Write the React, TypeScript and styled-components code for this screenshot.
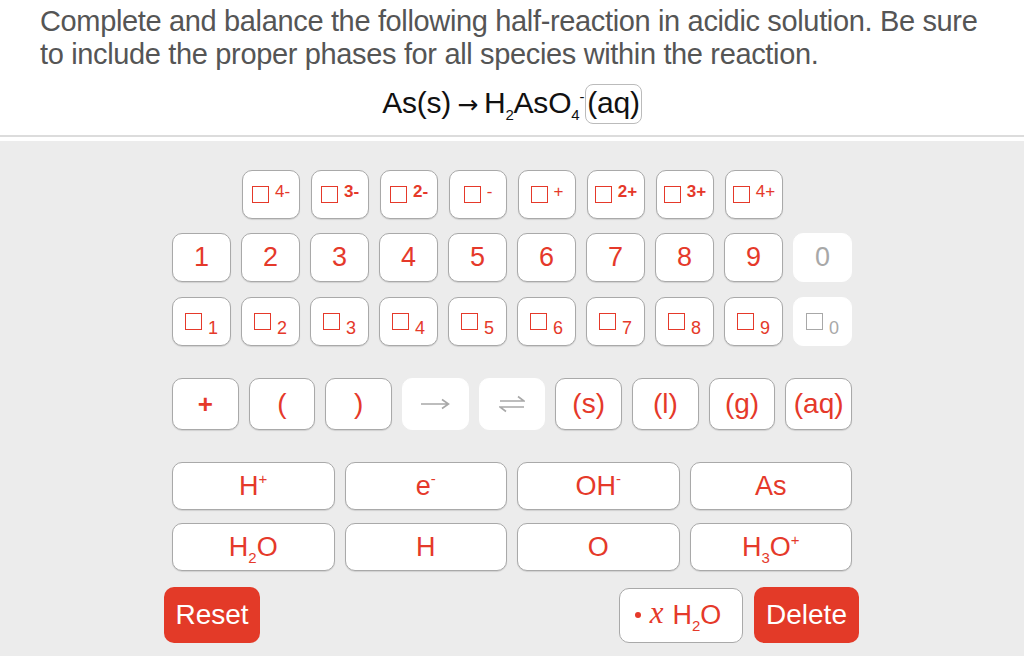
import styled, { createGlobalStyle } from 'styled-components';

const Global = createGlobalStyle`
    html, body { margin: 0; padding: 0; background: #ececec; }
    body { font-family: "Liberation Sans", Arial, sans-serif; }
`;

const RED = '#e5392a';

const Page = styled.div`
    width: 1024px;
    height: 656px;
    overflow: hidden;
    display: flex;
    flex-direction: column;
`;

const Header = styled.div`
    background: #fff;
    padding: 5px 0 0 40px;
    height: 137px;
    box-sizing: border-box;
    border-bottom: 2px solid #dcdcdc;
    margin-bottom: 4px;
    box-shadow: 0 4px 0 #fff;
`;

const Question = styled.p`
    margin: 0;
    font-size: 29px;
    line-height: 33px;
    color: #555;
    letter-spacing: -0.35px;
`;

const Equation = styled.div`
    margin-top: 13px;
    padding-right: 40px;
    text-align: center;
    font-size: 30px;
    color: #111;
    letter-spacing: -0.2px;
`;

const Arrow = styled.span`
    font-family: "DejaVu Sans", sans-serif;
    font-size: 25px;
    margin: 0 6px;
`;

const Sub = styled.sub`
    font-size: 15px;
    vertical-align: -7px;
    line-height: 0;
`;

const Sup = styled.sup`
    font-size: 15px;
    vertical-align: 11px;
    line-height: 0;
`;

const Cursor = styled.span`
    display: inline-block;
    border: 1px solid #bbb;
    border-radius: 8px;
    padding: 1px 1px 4px;
    line-height: 33px;
    margin-left: 1px;
`;

const Pad = styled.div`
    padding: 29px 0 0 172px;
    display: flex;
    flex-direction: column;
    width: 680px;
`;

const Row = styled.div<{ $cols: number; $gap: number; $top: number; $indent?: number; $right?: number }>`
    display: grid;
    grid-template-columns: repeat(${p => p.$cols}, 1fr);
    column-gap: ${p => p.$gap}px;
    margin-top: ${p => p.$top}px;
    padding-left: ${p => p.$indent || 0}px;
    padding-right: ${p => p.$right || 0}px;
`;

const Key = styled.button<{ $h: number; $off?: boolean; $size?: number; $bold?: boolean }>`
    height: ${p => p.$h}px;
    background: #fff;
    border: 1px solid ${p => (p.$off ? '#fff' : '#a9a9a9')};
    border-radius: 10px;
    box-shadow: ${p => (p.$off ? 'none' : '0 1px 1px rgba(0,0,0,0.12)')};
    color: ${p => (p.$off ? '#a8a8a8' : RED)};
    font-family: "Liberation Sans", Arial, sans-serif;
    font-size: ${p => p.$size || 27}px;
    font-weight: ${p => (p.$bold ? 700 : 400)};
    padding: 0;
    display: flex;
    align-items: center;
    justify-content: center;
    box-sizing: border-box;
`;

const Label = styled.span``;

const Square = styled.span`
    display: inline-block;
    width: 15px;
    height: 15px;
    border: 1.5px solid currentColor;
`;

const Charge = styled.span<{ $bold?: boolean }>`
    font-size: 17px;
    align-self: flex-start;
    margin-top: 11px;
    margin-left: 6px;
    font-weight: ${p => (p.$bold ? 700 : 400)};
`;

const Count = styled.span`
    font-size: 18px;
    align-self: flex-end;
    margin-bottom: 6px;
    margin-left: 6px;
`;

const BoxWrap = styled.span`
    display: flex;
    height: 100%;
    align-items: center;
`;

const BottomRow = styled.div`
    display: flex;
    align-items: center;
    margin: 16px 0 0 -8px;
    width: 695px;
`;

const Solid = styled.button<{ $w: number }>`
    width: ${p => p.$w}px;
    height: 56px;
    padding: 0;
    background: #e33a28;
    border: none;
    border-radius: 10px;
    color: #fff;
    font-family: "Liberation Sans", Arial, sans-serif;
    font-size: 28px;
`;

const Water = styled.button`
    margin-left: auto;
    margin-right: 11px;
    width: 124px;
    height: 55px;
    background: #fff;
    border: 1px solid #a9a9a9;
    border-radius: 10px;
    color: ${RED};
    font-family: "Liberation Sans", Arial, sans-serif;
    font-size: 27px;
    display: flex;
    align-items: center;
    justify-content: center;
    gap: 9px;
    padding: 0 6px 0 0;
`;

const Dot = styled.span`
    width: 6px;
    height: 6px;
    border-radius: 50%;
    background: ${RED};
`;

const MathX = styled.span`
    font-family: "Liberation Serif", "Times New Roman", serif;
    font-style: italic;
    font-size: 31px;
    margin-top: -5px;
`;

const RightArrow = () => (
    <svg width="30" height="14" viewBox="0 0 30 14">
        <path d="M1 7H28M22 2.5L28.5 7L22 11.5" fill="none" stroke="currentColor" strokeWidth="1.6" />
    </svg>
);

const Equilibrium = () => (
    <svg width="26" height="18" viewBox="0 0 26 18">
        <path d="M1 6H25L19 1.5" fill="none" stroke="currentColor" strokeWidth="1.6" />
        <path d="M25 12H1L7 16.5" fill="none" stroke="currentColor" strokeWidth="1.6" />
    </svg>
);

const charges: [string, boolean][] = [
    ['4-', false], ['3-', true], ['2-', true], ['-', false],
    ['+', false], ['2+', true], ['3+', true], ['4+', false],
];

const numbers = ['1', '2', '3', '4', '5', '6', '7', '8', '9', '0'];

export default function App() {
    return (
        <Page>
            <Global />
            <Header>
                <Question>
                    Complete and balance the following half-reaction in acidic solution. Be sure
                    <br />
                    to include the proper phases for all species within the reaction.
                </Question>
                <Equation>
                    As(s)<Arrow>→</Arrow>H<Sub>2</Sub>AsO<Sub>4</Sub>
                    <Sup>-</Sup>
                    <Cursor>(aq)</Cursor>
                </Equation>
            </Header>
            <Pad>
                <Row $cols={8} $gap={11} $top={0} $indent={70} $right={69}>
                    {charges.map(([c, b]) => (
                        <Key key={c} $h={49}>
                            <BoxWrap>
                                <Square />
                                <Charge $bold={b}>{c}</Charge>
                            </BoxWrap>
                        </Key>
                    ))}
                </Row>
                <Row $cols={10} $gap={10} $top={14}>
                    {numbers.map(n => (
                        <Key key={n} $h={49} $off={n === '0'} $size={27}>
                            {n}
                        </Key>
                    ))}
                </Row>
                <Row $cols={10} $gap={10} $top={15}>
                    {numbers.map(n => (
                        <Key key={n} $h={49} $off={n === '0'}>
                            <BoxWrap>
                                <Square />
                                <Count>{n}</Count>
                            </BoxWrap>
                        </Key>
                    ))}
                </Row>
                <Row $cols={9} $gap={10} $top={32}>
                    <Key $h={52} $size={26} $bold>+</Key>
                    <Key $h={52} $size={28}>(</Key>
                    <Key $h={52} $size={28}>)</Key>
                    <Key $h={52} $off><RightArrow /></Key>
                    <Key $h={52} $off><Equilibrium /></Key>
                    <Key $h={52} $size={28}>(s)</Key>
                    <Key $h={52} $size={28}>(l)</Key>
                    <Key $h={52} $size={28}>(g)</Key>
                    <Key $h={52} $size={28}>(aq)</Key>
                </Row>
                <Row $cols={4} $gap={10} $top={32}>
                    <Key $h={48}><Label>H<Sup>+</Sup></Label></Key>
                    <Key $h={48}><Label>e<Sup>-</Sup></Label></Key>
                    <Key $h={48}><Label>OH<Sup>-</Sup></Label></Key>
                    <Key $h={48}>As</Key>
                </Row>
                <Row $cols={4} $gap={10} $top={13}>
                    <Key $h={48}><Label>H<Sub>2</Sub>O</Label></Key>
                    <Key $h={48}>H</Key>
                    <Key $h={48}>O</Key>
                    <Key $h={48}><Label>H<Sub>3</Sub>O<Sup>+</Sup></Label></Key>
                </Row>
                <BottomRow>
                    <Solid $w={96}>Reset</Solid>
                    <Water>
                        <Dot />
                        <MathX>x</MathX>
                        <span>H<Sub>2</Sub>O</span>
                    </Water>
                    <Solid $w={105}>Delete</Solid>
                </BottomRow>
            </Pad>
        </Page>
    );
}
